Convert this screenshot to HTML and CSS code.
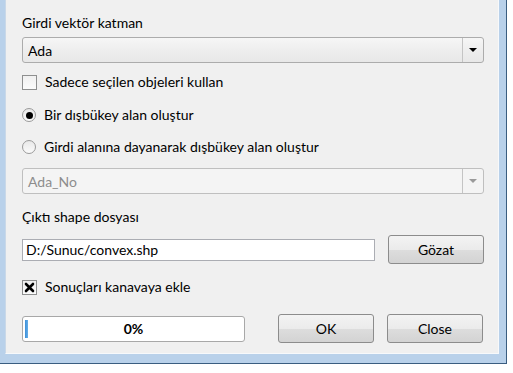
FILE: index.html
```html
<!DOCTYPE html>
<html lang="tr">
<head>
    <meta charset="UTF-8">
    <title>Dışbükey alan</title>
    <link rel="stylesheet" href="styles.css">
</head>
<body>

    <div class="frame">
        <div class="dialog">

            <div class="label row-label1">Girdi vektör katman</div>

            <div class="combo row-combo1">
                <span class="combo-text">Ada</span>
                <span class="combo-arrow"></span>
            </div>

            <div class="option row-check1">
                <span class="checkbox"></span>
                <span>Sadece seçilen objeleri kullan</span>
            </div>

            <div class="option row-radio1">
                <span class="radio checked"></span>
                <span>Bir dışbükey alan oluştur</span>
            </div>

            <div class="option row-radio2">
                <span class="radio"></span>
                <span>Girdi alanına dayanarak dışbükey alan oluştur</span>
            </div>

            <div class="combo disabled row-combo2">
                <span class="combo-text">Ada_No</span>
                <span class="combo-arrow"></span>
            </div>

            <div class="label row-label2">Çıktı shape dosyası</div>

            <div class="file-row">
                <div class="line-edit">D:/Sunuc/convex.shp</div>
                <button class="button">Gözat</button>
            </div>

            <div class="option row-check2">
                <span class="checkbox">
                    <svg width="11" height="11" viewBox="0 0 11 11">
                        <path d="M2 2 L9 9 M9 2 L2 9" stroke="#000" stroke-width="2.6" stroke-linecap="round"/>
                    </svg>
                </span>
                <span>Sonuçları kanavaya ekle</span>
            </div>

            <div class="bottom-row">
                <div class="progress">
                    <span class="progress-chunk"></span>
                    <span class="progress-text">0%</span>
                </div>
                <button class="button ok">OK</button>
                <button class="button">Close</button>
            </div>

        </div>
    </div>

</body>
</html>
```

FILE: styles.css
```css
body {
    margin: 0;
    background-color: #ffffff;
    font-family: Lato, "Noto Sans", sans-serif;
    font-size: 14px;
    color: #000000;
}
.frame {
    box-sizing: border-box;
    width: 507px;
    height: 364px;
    padding: 0 7px 9px 5px;
    background-color: #b9d1ea;
    border-right: 1px solid #3a5d80;
    border-bottom: 1px solid #3a5d80;
}
.dialog {
    height: 100%;
    box-sizing: border-box;
    background-color: #f0f0f0;
    border-left: 1px solid #c9d8e8;
    border-right: 1px solid #f7f9fb;
    border-bottom: 1px solid #f7f9fb;
    padding: 0 14px 0 16px;
    display: flex;
    flex-direction: column;
}
.label, .option {
    height: 16px;
    line-height: 16px;
    white-space: nowrap;
}
.option {
    display: flex;
    align-items: center;
    gap: 8px;
}
.row-label1 { margin-top: 15px; }
.row-combo1 { margin-top: 6px; }
.row-check1 { margin-top: 11px; }
.row-radio1 { margin-top: 17px; }
.row-radio2 { margin-top: 16px; }
.row-combo2 { margin-top: 13px; height: 24px; }
.row-label2 { margin-top: 15px; }
.row-check2 { margin-top: 15px; }

.combo {
    height: 26px;
    box-sizing: border-box;
    display: flex;
    border: 1px solid #acacac;
    border-radius: 3px;
    background: linear-gradient(#f6f6f6, #eeeeee 50%, #e8e8e8);
}
.combo-text {
    flex: 1;
    padding-left: 5px;
    display: flex;
    align-items: center;
}
.combo-arrow {
    width: 20px;
    border-left: 1px solid #c4c4c4;
    position: relative;
}
.combo-arrow::after {
    content: "";
    position: absolute;
    left: 6px;
    top: 50%;
    margin-top: -2px;
    border-left: 4px solid transparent;
    border-right: 4px solid transparent;
    border-top: 4px solid #000000;
}
.combo.disabled {
    border-color: #bfbfbf;
    background: #f4f4f4;
}
.combo.disabled .combo-text {
    color: #8d8d8d;
}
.combo.disabled .combo-arrow::after {
    border-top-color: #9a9a9a;
}

.checkbox {
    width: 13px;
    height: 13px;
    border: 1px solid #8e8f8f;
    background: linear-gradient(#f0f0f0, #fbfbfb);
    display: flex;
    align-items: center;
    justify-content: center;
    flex-shrink: 0;
}
.radio {
    width: 12px;
    height: 12px;
    border: 1px solid #9a9a9a;
    border-radius: 50%;
    background: linear-gradient(#e8e8e8, #fafafa);
    display: flex;
    align-items: center;
    justify-content: center;
    flex-shrink: 0;
}
.radio.checked::after {
    content: "";
    width: 7px;
    height: 7px;
    border-radius: 50%;
    background-color: #000000;
}

.file-row {
    margin-top: 10px;
    height: 29px;
    display: flex;
    align-items: center;
    gap: 13px;
}
.line-edit {
    flex: 1;
    height: 22px;
    box-sizing: border-box;
    border: 1px solid #abadb3;
    background-color: #ffffff;
    padding-left: 3px;
    line-height: 20px;
}
.button {
    width: 96px;
    height: 29px;
    box-sizing: border-box;
    border: 1px solid #8c8c8c;
    border-radius: 3px;
    background: linear-gradient(#f3f3f3, #ebebeb 50%, #dddddd 51%, #d3d3d3);
    font-family: inherit;
    font-size: 14px;
    color: #000000;
    padding: 0;
}

.bottom-row {
    margin-top: 19px;
    height: 29px;
    display: flex;
    align-items: center;
    gap: 13px;
}
.progress {
    width: 223px;
    height: 26px;
    box-sizing: border-box;
    border: 1px solid #a8a8a8;
    border-radius: 3px;
    background-color: #ffffff;
    margin-right: 20px;
    position: relative;
    display: flex;
    align-items: center;
    justify-content: center;
}
.progress-chunk {
    position: absolute;
    left: 2px;
    top: 3px;
    bottom: 3px;
    width: 3px;
    background: linear-gradient(90deg, #3c8fd8, #66aee8);
}
.progress-text {
    font-weight: bold;
}
```
